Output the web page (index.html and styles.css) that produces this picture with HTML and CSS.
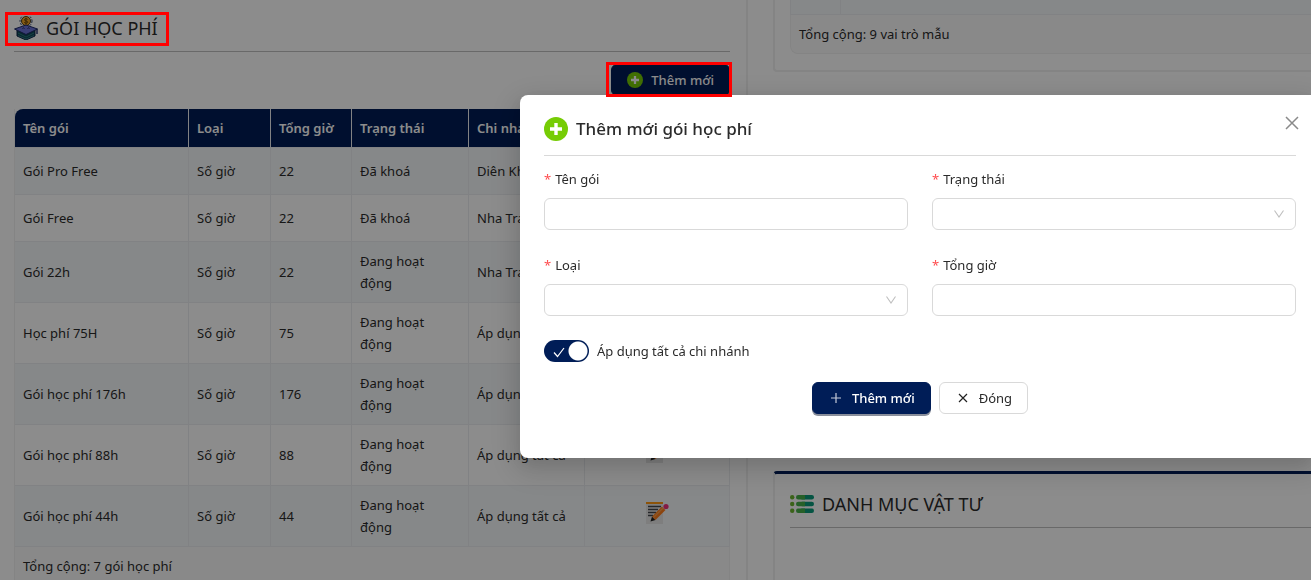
FILE: index.html
```html
<!DOCTYPE html>
<html lang="vi">

<head>
  <meta charset="UTF-8" />
  <meta name="viewport" content="width=device-width, initial-scale=1.0" />
  <title>Gói học phí</title>
  <link rel="stylesheet" href="styles.css">
</head>

<body>
  <!-- shared icons -->
  <svg class="sprite" aria-hidden="true">
    <symbol id="edit" viewBox="0 0 24 24">
      <rect x="1" y="1" width="17" height="22" fill="#e6e6e6" />
      <rect x="1" y="1" width="17" height="2" fill="#ff9811" />
      <path d="M3 5.500h13M3 8.500h10M3 11.500h8M3 14.500h5" stroke="#44484e" stroke-width="1.300" />
      <path d="M5.500 20.500l1.500-5 3.500 3.500z" fill="#222" />
      <path d="M7 15.500L17 5.500l3.500 3.500-10 10z" fill="#ff7d1a" />
      <path d="M8.500 16.500l10-10" stroke="#ffa04a" stroke-width="1.200" />
      <path d="M17 5.500l1.500-1.500 3.500 3.500-1.500 1.500z" fill="#e8e8e8" />
      <circle cx="21" cy="5.500" r="2.600" fill="#f0307a" />
    </symbol>
    <symbol id="add" viewBox="0 0 24 24">
      <circle cx="12" cy="12" r="12" fill="#76cc05" />
      <path d="M12 6v12M6 12h12" stroke="#fff" stroke-width="3.4" />
    </symbol>
    <symbol id="down" viewBox="0 0 12 12">
      <path d="M1.5 2.5L6 9l4.500-6.500" fill="none" stroke="#bfbfbf" stroke-width="1.100" />
    </symbol>
  </svg>

  <main class="page">
    <section class="card card-left">
      <h2 class="title">
        <svg width="24" height="24" viewBox="0 0 24 24">
          <circle cx="12" cy="5" r="6" fill="none" stroke="#283c66" stroke-dasharray="2 1.500" />
          <circle cx="12" cy="5" r="4.500" fill="#f5a623" stroke="#4a3a18" />
          <path d="M13.800 3.500c-1-1.200-3.600-.8-3.400.5.200 1.300 3.400.8 3.400 2.200 0 1.200-2.600 1.400-3.600.2M12 2v6.200" fill="none" stroke="#5a3c08" stroke-width=".9" />
          <path d="M3 13v7l9 4 9-4v-7z" fill="#0d4a56" stroke="#11264a" />
          <path d="M4 17l8 4 8-4M4 19.500l8 3.500 8-3.500" fill="none" stroke="#35808a" stroke-width=".8" />
          <path d="M.5 13L12 9l11.500 4L12 18.500z" fill="#6b72d6" stroke="#1e2a66" />
          <path d="M8.500 12.500q1-1.200 2 0M13.500 12.500q1-1.200 2 0" fill="none" stroke="#1e2450" />
          <path d="M23 13v5" stroke="#1e2a66" stroke-width="1.400" />
        </svg>
        GÓI HỌC PHÍ
        <span class="mark mark-title"></span>
      </h2>

      <div class="toolbar">
        <button class="btn btn-primary btn-new"><svg width="16" height="16"><use href="#add" /></svg>Thêm mới</button>
        <span class="mark mark-btn"></span>
      </div>

      <table class="fees">
        <colgroup>
          <col>
          <col class="col-type">
          <col class="col-hours">
          <col class="col-status">
          <col class="col-branch">
          <col class="col-action">
        </colgroup>
        <thead>
          <tr>
            <th>Tên gói</th>
            <th>Loại</th>
            <th>Tổng giờ</th>
            <th>Trạng thái</th>
            <th>Chi nhánh</th>
            <th></th>
          </tr>
        </thead>
        <tbody>
          <tr>
            <td>Gói Pro Free</td><td>Số giờ</td><td>22</td><td class="status">Đã khoá</td><td>Diên Khánh</td>
            <td class="action"><button class="edit" aria-label="Sửa"><svg width="24" height="24"><use href="#edit" /></svg></button></td>
          </tr>
          <tr>
            <td>Gói Free</td><td>Số giờ</td><td>22</td><td class="status">Đã khoá</td><td>Nha Trang</td>
            <td class="action"><button class="edit" aria-label="Sửa"><svg width="24" height="24"><use href="#edit" /></svg></button></td>
          </tr>
          <tr>
            <td>Gói 22h</td><td>Số giờ</td><td>22</td><td class="status">Đang hoạt động</td><td>Nha Trang</td>
            <td class="action"><button class="edit" aria-label="Sửa"><svg width="24" height="24"><use href="#edit" /></svg></button></td>
          </tr>
          <tr>
            <td>Học phí 75H</td><td>Số giờ</td><td>75</td><td class="status">Đang hoạt động</td><td>Áp dụng tất cả</td>
            <td class="action"><button class="edit" aria-label="Sửa"><svg width="24" height="24"><use href="#edit" /></svg></button></td>
          </tr>
          <tr>
            <td>Gói học phí 176h</td><td>Số giờ</td><td>176</td><td class="status">Đang hoạt động</td><td>Áp dụng tất cả</td>
            <td class="action"><button class="edit" aria-label="Sửa"><svg width="24" height="24"><use href="#edit" /></svg></button></td>
          </tr>
          <tr>
            <td>Gói học phí 88h</td><td>Số giờ</td><td>88</td><td class="status">Đang hoạt động</td><td>Áp dụng tất cả</td>
            <td class="action"><button class="edit" aria-label="Sửa"><svg width="24" height="24"><use href="#edit" /></svg></button></td>
          </tr>
          <tr>
            <td>Gói học phí 44h</td><td>Số giờ</td><td>44</td><td class="status">Đang hoạt động</td><td>Áp dụng tất cả</td>
            <td class="action"><button class="edit" aria-label="Sửa"><svg width="24" height="24"><use href="#edit" /></svg></button></td>
          </tr>
        </tbody>
      </table>
      <div class="total">Tổng cộng: 7 gói học phí</div>
    </section>

    <div class="side">
      <section class="card card-roles">
        <div class="last-row"></div>
        <div class="total total-end">Tổng cộng: 9 vai trò mẫu</div>
      </section>

      <section class="card card-supplies">
        <h2 class="title">
          <svg width="24" height="24" viewBox="0 0 24 24">
            <g fill="#6cb52f">
              <circle cx="2.200" cy="5.200" r="2.200" /><circle cx="2.200" cy="12" r="2.200" /><circle cx="2.200" cy="18.800" r="2.200" />
            </g>
            <g fill="#0a9a7a">
              <rect x="10" y="3" width="14" height="4.400" rx="2.200" /><rect x="10" y="9.800" width="14" height="4.400" rx="2.200" /><rect x="10" y="16.600" width="14" height="4.400" rx="2.200" />
            </g>
            <g fill="#45b04a">
              <path d="M8.200 3H15v4.400H8.200a2.200 2.200 0 010-4.400zM8.200 9.800H15v4.400H8.200a2.200 2.200 0 010-4.400zM8.200 16.600H15V21H8.200a2.200 2.200 0 010-4.400z" />
            </g>
          </svg>
          DANH MỤC VẬT TƯ
        </h2>
      </section>
    </div>
  </main>

  <div class="overlay">
    <form class="modal" role="dialog" aria-labelledby="modal-title">
      <header class="modal-head">
        <svg width="24" height="24"><use href="#add" /></svg>
        <h3 id="modal-title">Thêm mới gói học phí</h3>
        <button type="button" class="close" aria-label="Đóng cửa sổ">
          <svg width="14" height="14" viewBox="0 0 14 14"><path d="M1 1l12 12M13 1L1 13" stroke="#8a8a8a" stroke-width="1.500" /></svg>
        </button>
      </header>

      <div class="fields">
        <div class="field">
          <label for="name">Tên gói</label>
          <input type="text" id="name">
        </div>
        <div class="field">
          <label for="status">Trạng thái</label>
          <div class="select">
            <select id="status"><option></option></select>
            <svg width="12" height="12"><use href="#down" /></svg>
          </div>
        </div>
        <div class="field">
          <label for="type">Loại</label>
          <div class="select">
            <select id="type"><option></option></select>
            <svg width="12" height="12"><use href="#down" /></svg>
          </div>
        </div>
        <div class="field">
          <label for="hours">Tổng giờ</label>
          <input type="text" id="hours">
        </div>
      </div>

      <label class="switch">
        <span class="track">
          <input type="checkbox" checked>
          <svg width="12" height="12" viewBox="0 0 12 12"><path d="M1 6.500l3.500 4L11 2" fill="none" stroke="#fff" stroke-width="1.200" /></svg>
        </span>
        Áp dụng tất cả chi nhánh
      </label>

      <footer class="actions">
        <button type="button" class="btn btn-primary">
          <svg width="16" height="16" viewBox="0 0 16 16"><path d="M8 3v10M3 8h10" stroke="#c5cbd9" stroke-width="1.200" /></svg>Thêm mới
        </button>
        <button type="button" class="btn">
          <svg width="16" height="16" viewBox="0 0 16 16"><path d="M4 4l8 8M12 4l-8 8" stroke="#222" stroke-width="1.200" /></svg>Đóng
        </button>
      </footer>
    </form>
  </div>
</body>

</html>
```
FILE: styles.css
```css
* {
  box-sizing: border-box;
}

body {
  margin: 0;
  height: 100vh;
  overflow: hidden;
  background-color: #ffffff;
  color: #2b2b2b;
  font-family: "Noto Sans", "Open Sans", sans-serif;
  font-size: 13px;
  line-height: 22px;
}

button,
input,
select {
  font: inherit;
  color: inherit;
}

svg {
  display: block;
  flex: none;
}

.sprite {
  position: absolute;
  width: 0;
  height: 0;
}

.page {
  display: grid;
  grid-template-columns: 748fr 538fr;
  gap: 25px;
  height: 100vh;
  overflow: hidden;
}

.card {
  border: 2px solid #f0f0f0;
  border-radius: 4px;
}

.card-left {
  padding: 16px 16px 16px 14px;
  border-width: 0 2px 0 0;
  border-radius: 0;
}

.title {
  position: relative;
  display: flex;
  align-items: center;
  gap: 8px;
  height: 36px;
  margin: 0;
  padding-bottom: 11px;
  border-bottom: 1px solid #bfbfbf;
  font-size: 18px;
  font-weight: 400;
}

.toolbar {
  position: relative;
  display: flex;
  justify-content: flex-end;
  margin: 12px 0;
}

/* red frames */
.mark {
  position: absolute;
  z-index: 20;
  border: 3px solid #ff0000;
}

.mark-title {
  top: -4px;
  left: -9px;
  width: 164px;
  height: 34px;
}

.mark-btn {
  top: -2px;
  right: -2px;
  width: 126px;
  height: 35px;
}

.btn {
  display: flex;
  align-items: center;
  gap: 8px;
  height: 32px;
  padding: 0 15px;
  border: 1px solid #d9d9d9;
  border-radius: 6px;
  background-color: #ffffff;
}

.btn-primary {
  border-color: #001d57;
  background-color: #001d57;
  box-shadow: 0 2px 0 #8a8f9c;
  color: #ffffff;
  font-weight: 500;
}

.btn-new {
  box-shadow: none;
}

.fees {
  width: 100%;
  margin-top: 13px;
  table-layout: fixed;
  border-collapse: separate;
  border-spacing: 0;
  border-left: 1px solid #f0f0f0;
}

.col-type {
  width: 82px;
}

.col-hours {
  width: 81px;
}

.col-status {
  width: 117px;
}

.col-branch {
  width: 116px;
}

.col-action {
  width: 145px;
}

.fees th,
.fees td {
  padding: 8px;
  border-right: 1px solid #ebedf0;
  border-bottom: 1px solid #ebedf0;
  text-align: left;
}

.fees th {
  background-color: #001d57;
  color: #ffffff;
  font-weight: 600;
}

.fees th:first-child {
  border-top-left-radius: 8px;
}

.fees td {
  height: 47px;
}

.fees tbody tr:nth-child(odd) {
  background-color: #f5f8fa;
}

.fees .status {
  padding-right: 24px;
}

.fees .action {
  padding: 0 0 6px;
}

.edit {
  display: block;
  margin: 0 auto;
  padding: 0;
  border: none;
  background: none;
}

.total {
  padding: 8px;
  border: 1px solid #f0f0f0;
  border-top: none;
  background-color: #fafafa;
}

.total-end {
  border-right: none;
  border-bottom-left-radius: 8px;
}

.side {
  display: flex;
  flex-direction: column;
  gap: 399px;
}

.card-roles {
  padding: 0 0 16px 15px;
  border-width: 0 0 2px 2px;
  border-radius: 0 0 0 4px;
}

.last-row {
  height: 15px;
  border: 1px solid #ebedf0;
  border-width: 0 0 1px 1px;
  background: linear-gradient(#ebedf0, #ebedf0) 49px 0 / 1px 100% no-repeat #f5f8fa;
}

.card-supplies {
  min-height: 200px;
  padding: 18px 0 0 15px;
  border-top: 3px solid #001d57;
  border-right: none;
  border-radius: 4px 0 0 0;
}

/* modal */
.overlay {
  position: fixed;
  inset: 0;
  z-index: 10;
  padding: 95px 0 0 520px;
  background-color: rgba(0, 0, 0, 0.45);
}

.modal {
  padding: 20px 15px 44px 24px;
  border-radius: 8px 0 0 8px;
  background-color: #ffffff;
  box-shadow: 0 6px 16px rgba(0, 0, 0, 0.08), 0 9px 28px 8px rgba(0, 0, 0, 0.12);
}

.modal-head {
  display: flex;
  align-items: center;
  gap: 8px;
  height: 41px;
  padding-bottom: 12px;
  border-bottom: 1px solid #d9d9d9;
}

.modal-head h3 {
  flex: 1;
  margin: 0;
  font-size: 17px;
  font-weight: 500;
}

.close {
  align-self: flex-start;
  width: 22px;
  height: 16px;
  margin-right: -7px;
  padding: 1px 4px;
  border: none;
  background: none;
}

.fields {
  display: grid;
  grid-template-columns: 1fr 1fr;
  gap: 24px;
  margin: 12px 0 24px;
}

.field {
  display: flex;
  flex-direction: column;
  gap: 8px;
}

.field label::before {
  content: "*";
  margin-right: 4px;
  color: #ff4d4f;
}

.field input,
.field select {
  width: 100%;
  height: 32px;
  padding: 0 12px;
  border: 1px solid #d9d9d9;
  border-radius: 6px;
  background-color: #ffffff;
  appearance: none;
}

.select {
  position: relative;
}

.select svg {
  position: absolute;
  top: 10px;
  right: 11px;
  pointer-events: none;
}

.switch {
  display: flex;
  align-items: center;
  gap: 8px;
}

.track {
  position: relative;
}

.track input {
  display: block;
  width: 45px;
  height: 22px;
  margin: 0;
  border-radius: 11px;
  background: radial-gradient(circle at 34px 11px, #ffffff 9px, #001d57 10px);
  appearance: none;
}

.track svg {
  position: absolute;
  top: 6px;
  left: 9px;
}

.actions {
  display: flex;
  justify-content: center;
  gap: 8px;
  margin-top: 20px;
}
```
